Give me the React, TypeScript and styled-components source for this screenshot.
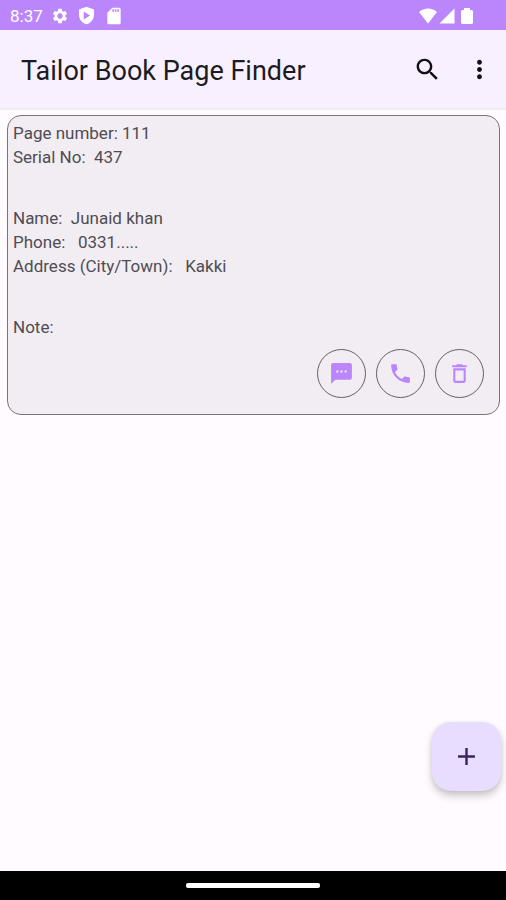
import React from "react";
import styled, { createGlobalStyle } from "styled-components";

const GlobalStyle = createGlobalStyle`
  *, *::before, *::after { box-sizing: border-box; }
  body { margin: 0; background: #fffbff; font-family: Roboto, "Liberation Sans", sans-serif; }
`;

const Screen = styled.div`
  display: flex;
  flex-direction: column;
  min-height: 100vh;
`;

const StatusBar = styled.div`
  display: flex;
  align-items: center;
  justify-content: space-between;
  height: 30px;
  padding: 1px 33px 0 10px;
  background: #bb86fc;
  color: #fff;
`;

const StatusGroup = styled.div<{ $gap: number }>`
  display: flex;
  align-items: center;
  gap: ${({ $gap }) => $gap}px;
`;

const Clock = styled.span`
  font-size: 17px;
  line-height: 20px;
`;

const Glyph = styled.svg`
  display: block;
  flex: none;
  fill: currentColor;
`;

const AppBar = styled.header`
  display: flex;
  align-items: center;
  height: 80px;
  padding: 0 11px 0 21px;
  background: #f8f0ff;
  border-bottom: 2px solid #f2edf2;
`;

const Title = styled.h1`
  flex: 1;
  margin: 0;
  padding-top: 4px;
  font-size: 27px;
  line-height: 36px;
  font-weight: 400;
  white-space: nowrap;
  color: #1c1b1f;
`;

const BarActions = styled.div`
  display: flex;
  align-items: center;
  gap: 20px;
`;

const BarButton = styled.button`
  display: grid;
  place-items: center;
  width: 32px;
  height: 48px;
  padding: 0;
  border: 0;
  background: none;
  color: #111;
  cursor: pointer;
`;

const Content = styled.main`
  position: relative;
  flex: 1;
  padding: 5px 6px 0 7px;
`;

const Card = styled.article`
  display: flex;
  flex-direction: column;
  padding: 5px 15px 16px 5px;
  border: 1px solid #777478;
  border-radius: 14px;
  background: #f2edf2;
`;

const Details = styled.div`
  display: flex;
  flex-direction: column;
  gap: 37px;
`;

const Line = styled.p`
  margin: 0;
  font-size: 17px;
  line-height: 24px;
  color: #4f4c52;
  white-space: pre-wrap;
`;

const CardActions = styled.div`
  display: flex;
  justify-content: flex-end;
  gap: 10px;
  margin-top: 10px;
`;

const RoundButton = styled.button`
  display: grid;
  place-items: center;
  width: 49px;
  height: 49px;
  padding: 0;
  border: 1px solid #626064;
  border-radius: 50%;
  background: none;
  color: #bb86fc;
  cursor: pointer;
`;

const AddButton = styled.button`
  position: absolute;
  right: 5px;
  bottom: 80px;
  display: grid;
  place-items: center;
  width: 69px;
  height: 69px;
  padding: 0;
  border: 0;
  border-radius: 19px;
  background: #e9ddff;
  color: #3a2560;
  box-shadow: 0 5px 8px rgba(0, 0, 0, 0.2), 0 1px 4px rgba(0, 0, 0, 0.08);
  cursor: pointer;
`;

const NavigationBar = styled.footer`
  display: grid;
  place-items: center;
  height: 29px;
  background: #000;
`;

const HomeHandle = styled.div`
  width: 134px;
  height: 5px;
  border-radius: 2px;
  background: #fff;
`;

type IconProps = { d: string; size: number; width?: number; box?: string };

const Icon = ({ d, size, width = size, box = "0 0 24 24" }: IconProps) => (
  <Glyph width={width} height={size} viewBox={box} aria-hidden="true">
    <path d={d} fillRule="evenodd" />
  </Glyph>
);

const paths = {
  settings:
    "M19.14 12.94c.04-.3.06-.61.06-.94 0-.32-.02-.64-.07-.94l2.03-1.58c.18-.14.23-.41.12-.61l-1.92-3.32c-.12-.22-.37-.29-.59-.22l-2.39.96c-.5-.38-1.03-.7-1.62-.94l-.36-2.54c-.04-.24-.24-.41-.48-.41h-3.84c-.24 0-.43.17-.47.41l-.36 2.54c-.59.24-1.13.57-1.62.94l-2.39-.96c-.22-.08-.47 0-.59.22L2.74 8.87c-.12.21-.08.47.12.61l2.03 1.58c-.05.3-.09.63-.09.94s.02.64.07.94l-2.03 1.58c-.18.14-.23.41-.12.61l1.92 3.32c.12.22.37.29.59.22l2.39-.96c.5.38 1.03.7 1.62.94l.36 2.54c.05.24.24.41.48.41h3.84c.24 0 .44-.17.47-.41l.36-2.54c.59-.24 1.13-.56 1.62-.94l2.39.96c.22.08.47 0 .59-.22l1.92-3.32c.12-.22.07-.47-.12-.61l-2.01-1.58zM12 15.6c-1.98 0-3.6-1.62-3.6-3.6s1.62-3.6 3.6-3.6 3.6 1.62 3.6 3.6-1.62 3.6-3.6 3.6z",
  shield:
    "M12 1 2.500 4.500V11c0 5.500 4 10.700 9.500 12 5.500-1.300 9.500-6.500 9.500-12V4.500zM8.500 7v10l8-5z",
  sdCard:
    "M18 2h-8L4 8v12c0 1.100.9 2 2 2h12c1.100 0 2-.9 2-2V4c0-1.100-.9-2-2-2zm-6 5h-2V4h2v3zm3 0h-2V4h2v3zm3 0h-2V4h2v3z",
  wifi: "M0 6.500C3.300 3.800 7.500 2 12 2s8.700 1.800 12 4.500L12 22z",
  signal: "M2 22h20V2z",
  battery: "M3 0h6v2h2l1 1v12l-1 1H1l-1-1V3l1-1h2z",
  search:
    "M15.500 14h-.79l-.28-.27C15.410 12.590 16 11.110 16 9.500 16 5.910 13.090 3 9.500 3S3 5.910 3 9.500 5.910 16 9.500 16c1.610 0 3.090-.59 4.230-1.570l.27.28v.79l5 4.990L20.490 19l-4.990-5zm-6 0C7.010 14 5 11.990 5 9.500S7.010 5 9.500 5 14 7.010 14 9.500 11.990 14 9.500 14z",
  more: "M12 8c1.100 0 2-.9 2-2s-.9-2-2-2-2 .9-2 2 .9 2 2 2zm0 2c-1.100 0-2 .9-2 2s.9 2 2 2 2-.9 2-2-.9-2-2-2zm0 6c-1.100 0-2 .9-2 2s.9 2 2 2 2-.9 2-2-.9-2-2-2z",
  message:
    "M20 2H4c-1.100 0-1.990.9-1.990 2L2 22l4-4h14c1.100 0 2-.9 2-2V4c0-1.100-.9-2-2-2zM9 11H7V9h2v2zm4 0h-2V9h2v2zm4 0h-2V9h2v2z",
  phone:
    "M6.620 10.790c1.440 2.830 3.760 5.140 6.590 6.590l2.200-2.200c.27-.27.67-.36 1.020-.24 1.120.37 2.330.57 3.570.57.55 0 1 .45 1 1V20c0 .55-.45 1-1 1-9.390 0-17-7.610-17-17 0-.55.45-1 1-1h3.500c.55 0 1 .45 1 1 0 1.250.2 2.450.57 3.570.11.35.03.74-.25 1.020l-2.200 2.200z",
  trash:
    "M6 19c0 1.100.9 2 2 2h8c1.100 0 2-.9 2-2V7H6v12zM8 9h8v10H8V9zm7.500-5-1-1h-5l-1 1H5v2h14V4z",
  add: "M19 13h-6v6h-2v-6H5v-2h6V5h2v6h6v2z",
};

const records = [
  {
    id: 1,
    groups: [
      ["Page number: 111", "Serial No:  437"],
      ["Name:  Junaid khan", "Phone:   0331.....", "Address (City/Town):   Kakki"],
      ["Note:"],
    ],
  },
];

export default function App() {
  return (
    <>
      <GlobalStyle />
      <Screen>
        <StatusBar>
          <StatusGroup $gap={8}>
            <Clock>8:37</Clock>
            <Icon d={paths.settings} size={18} />
            <Icon d={paths.shield} size={19} />
            <Icon d={paths.sdCard} size={20} />
          </StatusGroup>
          <StatusGroup $gap={1}>
            <Icon d={paths.wifi} size={18} />
            <Icon d={paths.signal} size={18} />
            <Icon d={paths.battery} size={16} width={16} box="-4 0 16 16" />
          </StatusGroup>
        </StatusBar>
        <AppBar>
          <Title>Tailor Book Page Finder</Title>
          <BarActions>
            <BarButton type="button" aria-label="Search">
              <Icon d={paths.search} size={29} />
            </BarButton>
            <BarButton type="button" aria-label="More options">
              <Icon d={paths.more} size={29} />
            </BarButton>
          </BarActions>
        </AppBar>
        <Content>
          {records.map((record) => (
            <Card key={record.id}>
              <Details>
                {record.groups.map((lines) => (
                  <div key={lines[0]}>
                    {lines.map((line) => (
                      <Line key={line}>{line}</Line>
                    ))}
                  </div>
                ))}
              </Details>
              <CardActions>
                <RoundButton type="button" aria-label="Send message">
                  <Icon d={paths.message} size={25} />
                </RoundButton>
                <RoundButton type="button" aria-label="Call">
                  <Icon d={paths.phone} size={25} />
                </RoundButton>
                <RoundButton type="button" aria-label="Delete">
                  <Icon d={paths.trash} size={25} />
                </RoundButton>
              </CardActions>
            </Card>
          ))}
          <AddButton type="button" aria-label="Add record">
            <Icon d={paths.add} size={29} />
          </AddButton>
        </Content>
        <NavigationBar>
          <HomeHandle />
        </NavigationBar>
      </Screen>
    </>
  );
}
